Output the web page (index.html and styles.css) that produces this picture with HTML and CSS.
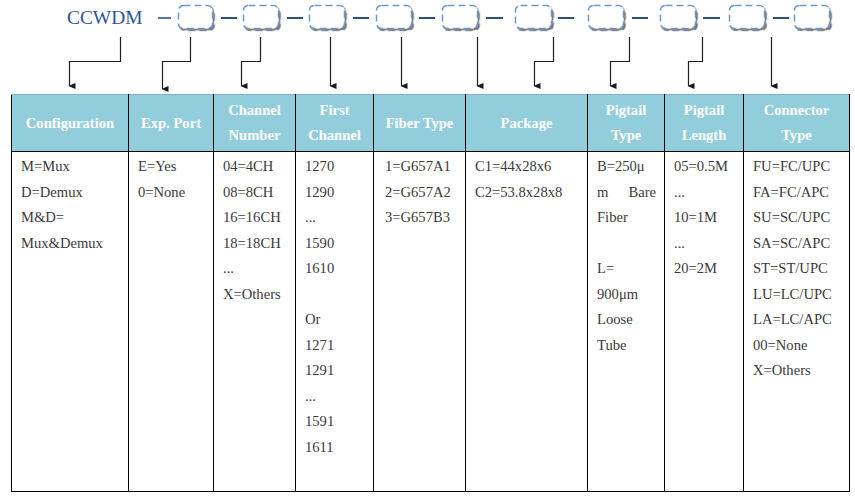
FILE: index.html
```html
<!DOCTYPE html>
<html>
<head>
<meta charset="utf-8">
<link rel="stylesheet" href="styles.css">
</head>
<body>
<div class="page">
  <div class="diagram">
    <svg class="diagram-svg" width="855" height="94" viewBox="0 0 855 94" xmlns="http://www.w3.org/2000/svg">
      <defs>
        <filter id="sh" x="-20%" y="-20%" width="150%" height="160%">
          <feDropShadow dx="1.6" dy="1.8" stdDeviation="0.7" flood-color="#555" flood-opacity="0.8"/>
        </filter>
        <marker id="ah" markerWidth="6" markerHeight="7" refX="3" refY="6" orient="auto-start-reverse" markerUnits="userSpaceOnUse">
          <path d="M0,0 L6,0 L3,7 Z" fill="#1a1a1a"/>
        </marker>
      </defs>
      <text class="title" x="67" y="24">CCWDM</text>
      <g class="dash-first"><line x1="158" y1="18" x2="171" y2="18"/></g>
      <g class="dashes">
        <line x1="221" y1="18" x2="237" y2="18"/>
        <line x1="287" y1="18" x2="303" y2="18"/>
        <line x1="353" y1="18" x2="369" y2="18"/>
        <line x1="419" y1="18" x2="435" y2="18"/>
        <line x1="486" y1="18" x2="503" y2="18"/>
        <line x1="558" y1="18" x2="574" y2="18"/>
        <line x1="632" y1="18" x2="648" y2="18"/>
        <line x1="703" y1="18" x2="720" y2="18"/>
        <line x1="773" y1="18" x2="789" y2="18"/>
      </g>
      <g class="boxes" filter="url(#sh)">
        <rect x="178.5" y="5.5" width="34" height="23" rx="5"/>
        <rect x="243.5" y="5.5" width="35" height="23" rx="5"/>
        <rect x="309.5" y="5.5" width="35" height="23" rx="5"/>
        <rect x="376.5" y="5.5" width="35" height="23" rx="5"/>
        <rect x="442.5" y="5.5" width="35" height="23" rx="5"/>
        <rect x="515.5" y="5.5" width="36" height="23" rx="5"/>
        <rect x="588.5" y="5.5" width="35" height="23" rx="5"/>
        <rect x="660.5" y="5.5" width="35" height="23" rx="5"/>
        <rect x="729.5" y="5.5" width="35" height="23" rx="5"/>
        <rect x="794.5" y="5.5" width="35" height="23" rx="5"/>
      </g>
      <g class="arrows">
        <path d="M120.5 37 V61.5 H69.5 V86" marker-end="url(#ah)"/>
        <path d="M190.5 37 V61.5 H162.5 V89" marker-end="url(#ah)"/>
        <path d="M260.5 37 V61.5 H241.5 V86" marker-end="url(#ah)"/>
        <path d="M330.5 37 V86" marker-end="url(#ah)"/>
        <path d="M401.5 37 V86" marker-end="url(#ah)"/>
        <path d="M477.5 37 V86" marker-end="url(#ah)"/>
        <path d="M553.5 37 V61.5 H534.5 V86" marker-end="url(#ah)"/>
        <path d="M629.5 37 V61.5 H610.5 V86" marker-end="url(#ah)"/>
        <path d="M702.5 37 V61.5 H688.5 V86" marker-end="url(#ah)"/>
        <path d="M771.5 37 V86" marker-end="url(#ah)"/>
      </g>
    </svg>
  </div>
  <table class="spec">
    <colgroup>
      <col class="c1"><col class="c2"><col class="c3"><col class="c4"><col class="c5"><col class="c6"><col class="c7"><col class="c8"><col class="c9">
    </colgroup>
    <thead>
      <tr>
        <th>Configuration</th>
        <th>Exp. Port</th>
        <th>Channel<br>Number</th>
        <th>First<br>Channel</th>
        <th>Fiber Type</th>
        <th>Package</th>
        <th>Pigtail<br>Type</th>
        <th>Pigtail<br>Length</th>
        <th>Connector<br>Type</th>
      </tr>
    </thead>
    <tbody>
      <tr>
        <td>M=Mux<br>D=Demux<br>M&amp;D=<br>Mux&amp;Demux</td>
        <td>E=Yes<br>0=None</td>
        <td>04=4CH<br>08=8CH<br>16=16CH<br>18=18CH<br>...<br>X=Others</td>
        <td>1270<br>1290<br>...<br>1590<br>1610<br><br>Or<br>1271<br>1291<br>...<br>1591<br>1611</td>
        <td class="wide-pad">1=G657A1<br>2=G657A2<br>3=G657B3</td>
        <td>C1=44x28x6<br>C2=53.8x28x8</td>
        <td><span class="line">B=250μ</span><span class="line justify">m Bare</span><span class="line">Fiber</span><br><span class="line">L=</span><span class="line">900μm</span><span class="line">Loose</span><span class="line">Tube</span></td>
        <td>05=0.5M<br>...<br>10=1M<br>...<br>20=2M</td>
        <td>FU=FC/UPC<br>FA=FC/APC<br>SU=SC/UPC<br>SA=SC/APC<br>ST=ST/UPC<br>LU=LC/UPC<br>LA=LC/APC<br>00=None<br>X=Others</td>
      </tr>
    </tbody>
  </table>
</div>
</body>
</html>
```
FILE: styles.css
```css
html, body {
  margin: 0;
  padding: 0;
  background: #ffffff;
}

.page {
  width: 855px;
  height: 497px;
  font-family: "Liberation Serif", "Times New Roman", serif;
}

.diagram {
  height: 94px;
}

.diagram-svg {
  display: block;
}

.title {
  font-family: "Liberation Serif", "Times New Roman", serif;
  font-size: 19.4px;
  fill: #2c5597;
}

.dash-first line {
  stroke: #4a78b8;
  stroke-width: 2;
}

.dashes line {
  stroke: #2d4e80;
  stroke-width: 2;
}

.boxes rect {
  fill: #ffffff;
  stroke: #6f97cc;
  stroke-width: 1.5;
  stroke-dasharray: 7 4;
}

.arrows path {
  fill: none;
  stroke: #1f1f1f;
  stroke-width: 1.2;
}

.spec {
  margin-left: 11px;
  border-collapse: collapse;
  table-layout: fixed;
  width: 839px;
  border: 1px solid #000;
}

.c1 { width: 117px; }
.c2 { width: 85px; }
.c3 { width: 82px; }
.c4 { width: 78px; }
.c5 { width: 92px; }
.c6 { width: 122px; }
.c7 { width: 77px; }
.c8 { width: 79px; }
.c9 { width: 106px; }

.spec th {
  background: #92cddb;
  color: #ffffff;
  font-weight: bold;
  font-size: 14.6px;
  line-height: 25px;
  height: 56px;
  padding: 0;
  text-align: center;
  vertical-align: middle;
  border: 1px solid #000;
  border-top: 1px solid #7fb4c4;
}

.spec td {
  font-size: 14.6px;
  line-height: 25.55px;
  color: #3a3a3a;
  vertical-align: top;
  text-align: left;
  padding: 2px 8px 0 9px;
  height: 337px;
  border: 1px solid #000;
}

.spec td.wide-pad {
  padding-left: 11px;
}

.line {
  display: block;
}

.justify {
  text-align: justify;
  text-align-last: justify;
}
```
